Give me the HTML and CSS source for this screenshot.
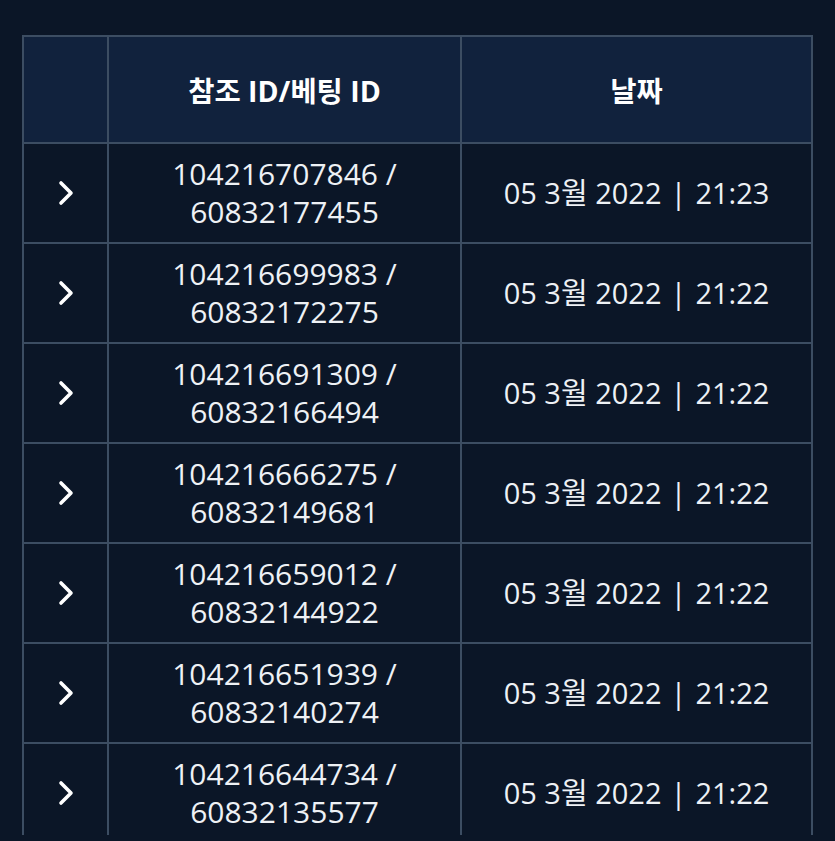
FILE: index.html
```html
<!DOCTYPE html>
<html lang="ko">
<head>
    <meta charset="UTF-8">
    <meta name="viewport" content="width=device-width, initial-scale=1.0">
    <title>베팅 내역</title>
    <link rel="stylesheet" href="styles.css">
</head>
<body>

<div class="history">
    <table class="bet-table">
        <thead>
            <tr>
                <th class="col-toggle"></th>
                <th class="col-id">참조 ID/베팅 ID</th>
                <th class="col-date">날짜</th>
            </tr>
        </thead>
        <tbody>
            <tr>
                <td class="toggle"><svg viewBox="0 0 16 26" width="16" height="26"><path d="M3 3 L13 13 L3 23" /></svg></td>
                <td>104216707846 /<br>60832177455</td>
                <td class="date">05 3월 2022<span class="sep">|</span>21:23</td>
            </tr>
            <tr>
                <td class="toggle"><svg viewBox="0 0 16 26" width="16" height="26"><path d="M3 3 L13 13 L3 23" /></svg></td>
                <td>104216699983 /<br>60832172275</td>
                <td class="date">05 3월 2022<span class="sep">|</span>21:22</td>
            </tr>
            <tr>
                <td class="toggle"><svg viewBox="0 0 16 26" width="16" height="26"><path d="M3 3 L13 13 L3 23" /></svg></td>
                <td>104216691309 /<br>60832166494</td>
                <td class="date">05 3월 2022<span class="sep">|</span>21:22</td>
            </tr>
            <tr>
                <td class="toggle"><svg viewBox="0 0 16 26" width="16" height="26"><path d="M3 3 L13 13 L3 23" /></svg></td>
                <td>104216666275 /<br>60832149681</td>
                <td class="date">05 3월 2022<span class="sep">|</span>21:22</td>
            </tr>
            <tr>
                <td class="toggle"><svg viewBox="0 0 16 26" width="16" height="26"><path d="M3 3 L13 13 L3 23" /></svg></td>
                <td>104216659012 /<br>60832144922</td>
                <td class="date">05 3월 2022<span class="sep">|</span>21:22</td>
            </tr>
            <tr>
                <td class="toggle"><svg viewBox="0 0 16 26" width="16" height="26"><path d="M3 3 L13 13 L3 23" /></svg></td>
                <td>104216651939 /<br>60832140274</td>
                <td class="date">05 3월 2022<span class="sep">|</span>21:22</td>
            </tr>
            <tr>
                <td class="toggle"><svg viewBox="0 0 16 26" width="16" height="26"><path d="M3 3 L13 13 L3 23" /></svg></td>
                <td>104216644734 /<br>60832135577</td>
                <td class="date">05 3월 2022<span class="sep">|</span>21:22</td>
            </tr>
        </tbody>
    </table>
</div>

</body>
</html>
```

FILE: styles.css
```css
body {
    margin: 0;
    background-color: #0b1627;
    font-family: "Open Sans", "Noto Sans CJK KR", sans-serif;
    color: #eef1f5;
}
.history {
    height: 835px;
    overflow: hidden;
    padding: 35px 22px 0;
    box-sizing: border-box;
}
.bet-table {
    width: 791px;
    border-collapse: collapse;
    table-layout: fixed;
}
.bet-table th, .bet-table td {
    border: 2px solid #3c4d62;
    text-align: center;
    vertical-align: middle;
    padding: 0;
}
.bet-table th {
    background-color: #11223d;
    height: 105px;
    font-size: 28.5px;
    font-weight: bold;
    color: #ffffff;
}
.bet-table td {
    height: 98px;
    font-size: 30px;
    line-height: 38px;
    background-color: #0b1627;
}
.bet-table td.date {
    font-size: 29px;
}
.col-toggle {
    width: 83px;
}
.col-id {
    width: 351px;
}
.sep {
    margin: 0 9px;
}
.toggle svg {
    display: block;
    margin: 0 auto;
    fill: none;
    stroke: #ffffff;
    stroke-width: 3.6;
    stroke-linecap: round;
    stroke-linejoin: round;
}
```
